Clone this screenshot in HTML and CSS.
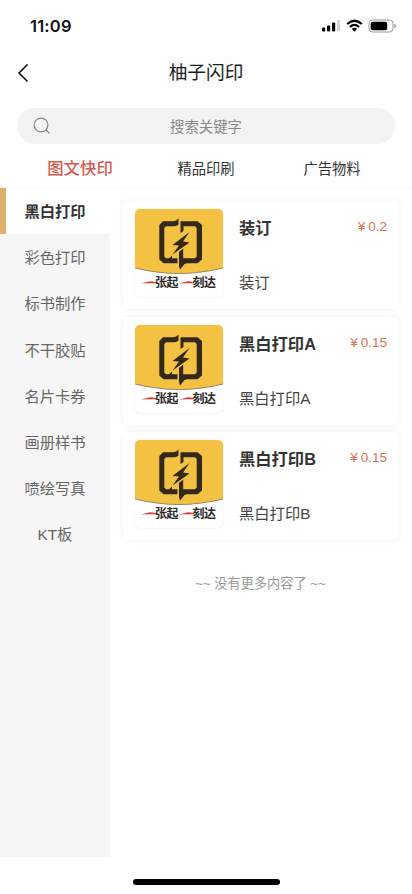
FILE: index.html
```
<!DOCTYPE html>
<html lang="zh-CN">
<head>
<meta charset="utf-8">
<meta name="viewport" content="width=device-width, initial-scale=1">
<title>柚子闪印</title>
<link rel="stylesheet" href="styles.css">
</head>
<body>
<svg width="0" height="0" class="defs" aria-hidden="true">
  <symbol id="logo" viewBox="0 0 88 88">
    <rect width="88" height="88" fill="#fff"/>
    <path d="M0 0H88V59Q44 70 0 59Z" fill="#f4c142"/>
    <path d="M0 59Q44 70 88 59" fill="none" stroke="#9c8a62" stroke-width="1.2"/>
    <g fill="#33291b">
      <path d="M28 12.300H38Q41.500 12 43.500 9.500V15.500Q42 17.300 39.500 17.300H31L29.300 19V47.500L31 49.200H34L37 46.500V49.200H42.500V54.300H28.500L24.300 50.500V16Z"/>
      <path d="M45.500 12.300H62.500L67 16V50.500L62.500 54.300H52Q49 54.500 48 57L45 60.500L44 57V43L48.200 39.500V49.200H60L61.700 47.500V19L60 17.300H48.500V22L45.500 24Z"/>
      <path d="M54.500 23L37.500 36L44 36.500L37.500 45.500L54.500 33.500L48 32.500Z"/>
    </g>
    <path d="M6 74.600L15 72.300L21 73V74.300L14 74.200ZM44 74.600L53 72.300L59 73V74.300L52 74.200Z" fill="#d23a35"/>
  </symbol>
</svg>
<header>
  <div class="status">
    <span class="time">11:09</span>
    <svg class="indicators" width="76" height="16" viewBox="0 0 76 16">
      <g fill="#000"><rect x="1" y="9.500" width="3.200" height="4" rx="1"/><rect x="6" y="7.500" width="3.200" height="6" rx="1"/><rect x="11" y="4.500" width="3.200" height="9" rx="1"/></g>
      <rect x="16" y="2" width="3" height="11.500" rx="1" fill="#d5d5d5"/>
      <g fill="none" stroke="#000" stroke-width="2.300"><path d="M26.200 6Q33.500-.6 40.800 6"/><path d="M28.900 9Q33.500 4.800 38.100 9"/></g>
      <path d="M30.800 10.800Q33.500 8.800 36.200 10.800L33.500 13.700Z"/>
      <rect x="48" y="2" width="24" height="12" rx="3.500" fill="#fff" stroke="#999"/>
      <rect x="49.700" y="3.700" width="16.500" height="8.600" rx="2"/>
      <path d="M73.300 6V10Q75 9.500 75 8T73.300 6" fill="#888"/>
    </svg>
  </div>
  <div class="nav">
    <svg class="back" width="12" height="20" viewBox="0 0 12 20"><path d="M10.500 1.500L2 10L10.500 18.500" fill="none" stroke="#111" stroke-width="1.600"/></svg>
    <h1>柚子闪印</h1>
  </div>
</header>
<div class="search">
  <svg class="glass" width="18" height="18" viewBox="0 0 18 18" fill="none" stroke="#858585" stroke-width="1.200"><circle cx="8" cy="8" r="6.900"/><path d="M13 13L16.500 16.500"/></svg>
  <span>搜索关键字</span>
</div>
<nav class="tabs"><span class="active">图文快印</span><span>精品印刷</span><span>广告物料</span></nav>
<main>
  <aside>
    <div class="cat active">黑白打印</div>
    <div class="cat">彩色打印</div>
    <div class="cat">标书制作</div>
    <div class="cat">不干胶贴</div>
    <div class="cat">名片卡券</div>
    <div class="cat">画册样书</div>
    <div class="cat">喷绘写真</div>
    <div class="cat">KT板</div>
  </aside>
  <section>
    <article>
      <div class="thumb"><svg width="88" height="88"><use href="#logo"/></svg><div class="slogan"><span>张起</span><span>刻达</span></div></div>
      <div class="info"><div class="row"><h2>装订</h2><span class="price"><i>¥</i>0.2</span></div><p>装订</p></div>
    </article>
    <article>
      <div class="thumb"><svg width="88" height="88"><use href="#logo"/></svg><div class="slogan"><span>张起</span><span>刻达</span></div></div>
      <div class="info"><div class="row"><h2>黑白打印A</h2><span class="price"><i>¥</i>0.15</span></div><p>黑白打印A</p></div>
    </article>
    <article>
      <div class="thumb"><svg width="88" height="88"><use href="#logo"/></svg><div class="slogan"><span>张起</span><span>刻达</span></div></div>
      <div class="info"><div class="row"><h2>黑白打印B</h2><span class="price"><i>¥</i>0.15</span></div><p>黑白打印B</p></div>
    </article>
    <div class="end">~~ 没有更多内容了 ~~</div>
  </section>
</main>
<footer><div class="home"></div></footer>
</body>
</html>
```
FILE: styles.css
```
* { box-sizing: border-box; margin: 0; padding: 0; }
body {
  height: 894px;
  display: flex;
  flex-direction: column;
  overflow: hidden;
  background: #fefefe;
  color: #333;
  font-family: "Liberation Sans", "Noto Sans CJK SC", sans-serif;
}
svg { display: block; flex: none; }
.defs { position: absolute; }
.status {
  height: 50px;
  padding: 1px 15px 0 30px;
  display: flex;
  align-items: center;
  justify-content: space-between;
}
.time { font: 600 16.5px/20px Inter, sans-serif; color: #111; letter-spacing: 0.2px; }
.nav {
  height: 46px;
  padding: 0 17px;
  display: grid;
  grid-template-columns: 12px 1fr 12px;
  align-items: center;
}
h1 { font-size: 18.7px; line-height: 28px; font-weight: 400; color: #1d1d1d; text-align: center; }
.search {
  height: 36px;
  margin: 12px 17px 0;
  padding: 0 16px;
  display: grid;
  grid-template-columns: 18px 1fr 18px;
  align-items: center;
  border-radius: 18px;
  background: #f3f3f3;
  color: #888;
  font-size: 14.4px;
  text-align: center;
}
.search span { padding-bottom: 2px; }
.tabs {
  height: 44px;
  padding: 3px 17px 0;
  display: grid;
  grid-template-columns: repeat(3, 1fr);
  align-items: center;
  border-bottom: 1px solid #f8f8f8;
  text-align: center;
  font-size: 14.3px;
}
.tabs .active { color: #d45b50; font-size: 16.4px; font-weight: 500; }
main { height: 669px; display: flex; }
aside { width: 110px; background: #f6f6f6; }
.cat {
  height: 46.200px;
  padding-bottom: 2px;
  display: flex;
  align-items: center;
  justify-content: center;
  font-size: 15.3px;
  color: #666;
}
.cat.active { background: #fefefe; color: #333; font-weight: 700; border-left: 6px solid #deb06c; padding-right: 6px; }
section { flex: 1; padding: 13px 13px 0; display: flex; flex-direction: column; gap: 7.500px; }
article {
  height: 108px;
  padding: 8px 12px 0;
  display: flex;
  gap: 16px;
  border-radius: 6px;
  background: #fff;
  box-shadow: 0 0 6px rgba(0, 0, 0, .05);
}
.thumb {
  width: 88px;
  height: 88px;
  position: relative;
  flex: none;
  overflow: hidden;
  border-radius: 5px;
  box-shadow: 0 0 1px rgba(0, 0, 0, .3);
}
.slogan {
  position: absolute;
  left: 20px;
  top: 66px;
  display: flex;
  gap: 14.500px;
  font-size: 12px;
  line-height: 16px;
  font-weight: 700;
  letter-spacing: -0.5px;
  color: #2e2929;
}
.info { flex: 1; }
.row { height: 22px; margin-top: 8px; display: flex; justify-content: space-between; }
h2 { font-size: 16.300px; line-height: 22px; font-weight: 700; }
.price { font-size: 13.500px; line-height: 20px; color: #db704f; }
.price i { font-style: normal; margin-right: 3px; }
p { margin-top: 33px; font-size: 15.300px; line-height: 22px; color: #444; }
.end { margin-top: 26px; margin-right: 1px; font-size: 13.2px; line-height: 20px; color: #999; text-align: center; }
footer { flex: 1; display: flex; justify-content: center; padding-top: 22px; }
.home { width: 147px; height: 6px; border-radius: 3px; background: #000; }
```
